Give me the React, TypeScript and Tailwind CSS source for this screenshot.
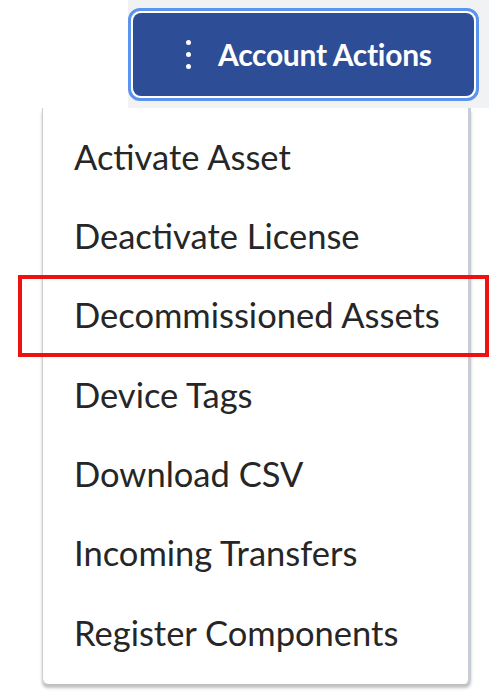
import React from "react";

const items = [
  "Activate Asset",
  "Deactivate License",
  "Decommissioned Assets",
  "Device Tags",
  "Download CSV",
  "Incoming Transfers",
  "Register Components",
];

export default function App() {
  return (
    <div
      className="w-[498px] h-[695px] bg-white overflow-hidden relative"
      style={{ fontFamily: "Lato, 'Open Sans', sans-serif" }}
    >
      <div className="ml-[128px] w-[361px] h-[108px] bg-[#f1f2f3] pt-[8px]">
        <div className="w-[351px] h-[93px] rounded-[12px] border-[3px] border-[#5b93ee] bg-white p-[2px]">
          <button className="w-full h-full rounded-[8px] bg-[#2d4d97] flex items-center pl-[53px] text-white">
            <span className="flex flex-col gap-[7px] mr-[27px]">
              <span className="w-[5px] h-[5px] rounded-full bg-white" />
              <span className="w-[5px] h-[5px] rounded-full bg-white" />
              <span className="w-[5px] h-[5px] rounded-full bg-white" />
            </span>
            <span className="text-[30px] font-bold tracking-[-0.3px]">Account Actions</span>
          </button>
        </div>
      </div>
      <div className="ml-[42px] w-[429px] h-[576px] bg-white border-l border-[#cfcfcf] border-r-[3px] border-r-[#c8ccd4] rounded-b-[6px] shadow-[0_4px_3px_rgba(0,0,0,0.25)] pt-[9px]">
        {items.map((t) => (
          <div key={t} className="h-[79.3px] flex items-center pl-[31px] text-[34.5px] text-[#262626]">
            {t}
          </div>
        ))}
      </div>
      <div className="absolute left-[18px] top-[275px] w-[471px] h-[82px] border-[4px] border-[#ee1111]" />
    </div>
  );
}
